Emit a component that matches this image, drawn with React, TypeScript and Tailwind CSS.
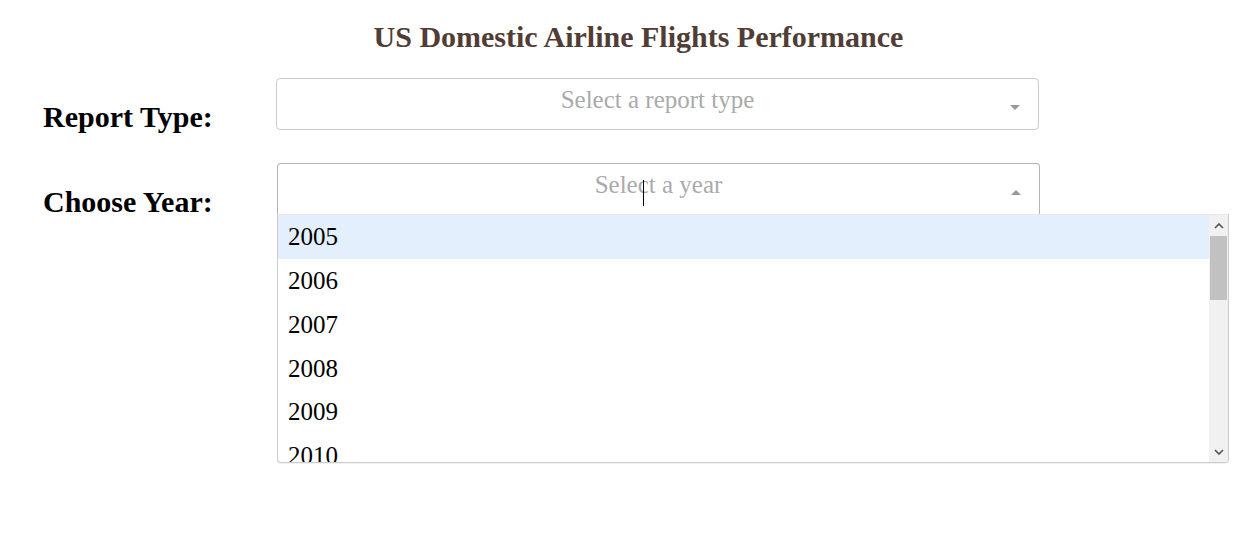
import React from "react";

const years = ["2005", "2006", "2007", "2008", "2009", "2010"];

function Arrow({ up }: { up?: boolean }) {
  return (
    <svg width="12" height="8" viewBox="0 0 12 8" className="shrink-0">
      {up ? <path d="M1 7 L6 2 L11 7 Z" fill="#999" /> : <path d="M1 1 L11 1 L6 6 Z" fill="#999" />}
    </svg>
  );
}

export default function App() {
  return (
    <div className="w-[1259px] h-[542px] bg-white overflow-hidden" style={{ fontFamily: '"Liberation Serif", "Times New Roman", serif' }}>
      <h1 className="pt-[20px] pl-[18px] text-center text-[30px] leading-[34px] font-bold text-[#503D36]">
        US Domestic Airline Flights Performance
      </h1>
      <div className="flex mt-[24px]">
        <div className="w-[276px] pl-[43px] pt-[22px] text-[30px] leading-[34px] font-bold text-black">Report Type:</div>
        <div className="w-[763px] h-[52px] border border-[#cccccc] rounded-[4px] flex items-start pt-[4px]">
          <div className="flex-1 text-center text-[25px] leading-[34px] text-[#aaaaaa] pl-[46px]">Select a report type</div>
          <div className="w-[46px] h-[34px] flex items-center justify-center mt-[8px]"><Arrow /></div>
        </div>
      </div>
      <div className="flex mt-[29px]">
        <div className="w-[277px] pl-[43px] pt-[22px] text-[30px] leading-[34px] font-bold text-black">Choose Year:</div>
        <div className="flex flex-col">
          <div className="relative w-[763px] h-[51px] border border-[#b3b3b3] border-b-0 rounded-t-[4px] flex items-start pt-[4px]">
            <div className="flex-1 text-center text-[25px] leading-[34px] text-[#aaaaaa] pl-[46px]">Select a year</div>
            <div className="w-[46px] h-[34px] flex items-center justify-center mt-[7px]"><Arrow up /></div>
            <div className="absolute left-[365px] top-[16px] w-[1px] h-[26px] bg-black" />
          </div>
          <div className="w-[952px] h-[249px] border border-[#cccccc] border-t-[#e6e6e6] rounded-b-[4px] shadow-[0_1px_1px_rgba(0,0,0,0.06)] flex overflow-hidden">
            <div className="flex-1 flex flex-col overflow-hidden">
              {years.map((y, i) => (
                <div
                  key={y}
                  className={`shrink-0 h-[43.8px] flex items-center px-[10px] text-[25px] text-black ${i === 0 ? "bg-[#e3effc]" : ""}`}
                >
                  {y}
                </div>
              ))}
            </div>
            <div className="w-[19px] bg-[#f1f1f1] flex flex-col items-center shrink-0">
              <div className="h-[21px] flex items-center justify-center">
                <svg width="10" height="6" viewBox="0 0 10 6"><path d="M1 5 L5 1 L9 5" stroke="#505050" strokeWidth="1.6" fill="none" /></svg>
              </div>
              <div className="w-[17px] h-[64px] bg-[#c1c1c1]" />
              <div className="flex-1" />
              <div className="h-[21px] flex items-center justify-center">
                <svg width="10" height="6" viewBox="0 0 10 6"><path d="M1 1 L5 5 L9 1" stroke="#505050" strokeWidth="1.6" fill="none" /></svg>
              </div>
            </div>
          </div>
        </div>
      </div>
    </div>
  );
}
